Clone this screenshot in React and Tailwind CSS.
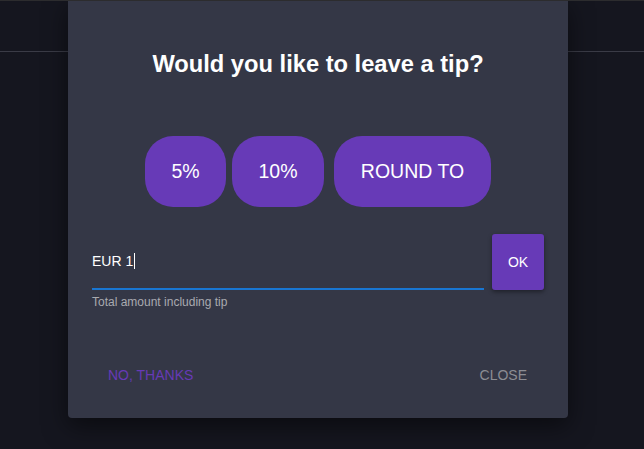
export default function App() {
  const font = { fontFamily: '"Liberation Sans", Arial, sans-serif' };
  return (
    <div className="relative w-[644px] h-[449px] overflow-hidden bg-[#15161f]" style={font}>
      <div className="h-[52px] border-b border-[#3a3b46]" />
      <div className="absolute left-[68px] top-0 w-[500px] h-[418px] bg-[#343746] rounded-b-[4px] shadow-[0_8px_24px_rgba(0,0,0,0.5)] flex flex-col">
        <h2 className="pt-[48px] text-center text-[23.7px] leading-[32px] font-bold text-white">
          Would you like to leave a tip?
        </h2>
        <div className="mt-[56px] flex justify-center">
          <button className="w-[81px] h-[71px] rounded-[28px] bg-[#673ab7] text-white text-[19.5px] flex items-center justify-center">5%</button>
          <button className="ml-[6px] w-[92px] h-[71px] rounded-[28px] bg-[#673ab7] text-white text-[19.5px] flex items-center justify-center">10%</button>
          <button className="ml-[10px] w-[157px] h-[71px] rounded-[28px] bg-[#673ab7] text-white text-[19.5px] flex items-center justify-center">ROUND TO</button>
        </div>
        <div className="mt-[27px] px-[24px] flex items-start gap-[8px]">
          <div className="flex-1 flex flex-col">
            <div className="h-[56px] pt-[17px] border-b-2 border-[#1976d2] flex items-start">
              <span className="text-[14px] leading-[20px] text-white">EUR 1</span>
              <span className="ml-[1px] mt-[2px] w-px h-[16px] bg-white" />
            </div>
            <div className="mt-[4px] text-[12px] leading-[16px] text-[#a9aab0]">Total amount including tip</div>
          </div>
          <button className="w-[52px] h-[56px] rounded-[3px] bg-[#673ab7] text-white text-[14px] shadow-[0_2px_4px_rgba(0,0,0,0.4)] flex items-center justify-center">OK</button>
        </div>
        <div className="mt-[55px] px-[24px] flex justify-between">
          <button className="px-[16px] text-[14px] leading-[20px] text-[#673ab7]">NO, THANKS</button>
          <button className="px-[17px] text-[14px] leading-[20px] text-[#8c8d94]">CLOSE</button>
        </div>
      </div>
      <div className="absolute left-0 top-0 w-full h-px bg-[#2c2c2e]" />
    </div>
  );
}
